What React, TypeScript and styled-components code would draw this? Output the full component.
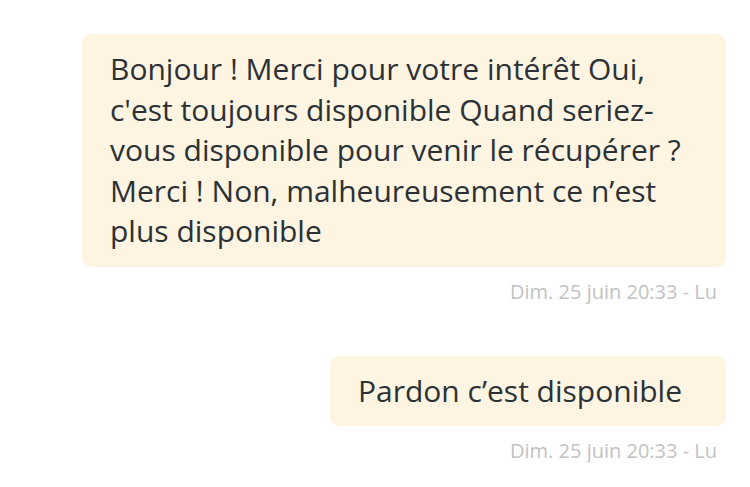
import React from "react";
import styled, { createGlobalStyle } from "styled-components";

const Global = createGlobalStyle`
  html, body { margin: 0; padding: 0; background: #ffffff; }
  body { font-family: "Open Sans", "Noto Sans", sans-serif; }
`;

const Thread = styled.div`
  display: flex;
  flex-direction: column;
  align-items: flex-end;
  padding: 34px 24px 0 82px;
`;

const Message = styled.div<{ $gap: number }>`
  display: flex;
  flex-direction: column;
  align-items: flex-end;
  margin-bottom: ${(p) => p.$gap}px;
`;

const Bubble = styled.div`
  background: #fdf5e2;
  border-radius: 9px;
  padding: 15px 44px 15px 28px;
  font-size: 30px;
  line-height: 40.5px;
  color: #2b3135;
`;

const Meta = styled.div`
  margin-top: 14px;
  margin-right: 9px;
  font-size: 20px;
  line-height: 22px;
  color: #c2c2c2;
`;

const messages = [
  {
    text: "Bonjour ! Merci pour votre intérêt Oui, c'est toujours disponible Quand seriez-vous disponible pour venir le récupérer ? Merci ! Non, malheureusement ce n’est plus disponible",
    meta: "Dim. 25 juin 20:33 - Lu",
  },
  { text: "Pardon c’est disponible", meta: "Dim. 25 juin 20:33 - Lu" },
];

export default function App() {
  return (
    <>
      <Global />
      <Thread>
        {messages.map((m, i) => (
          <Message key={i} $gap={i === 0 ? 53 : 0}>
            <Bubble>{m.text}</Bubble>
            <Meta>{m.meta}</Meta>
          </Message>
        ))}
      </Thread>
    </>
  );
}
